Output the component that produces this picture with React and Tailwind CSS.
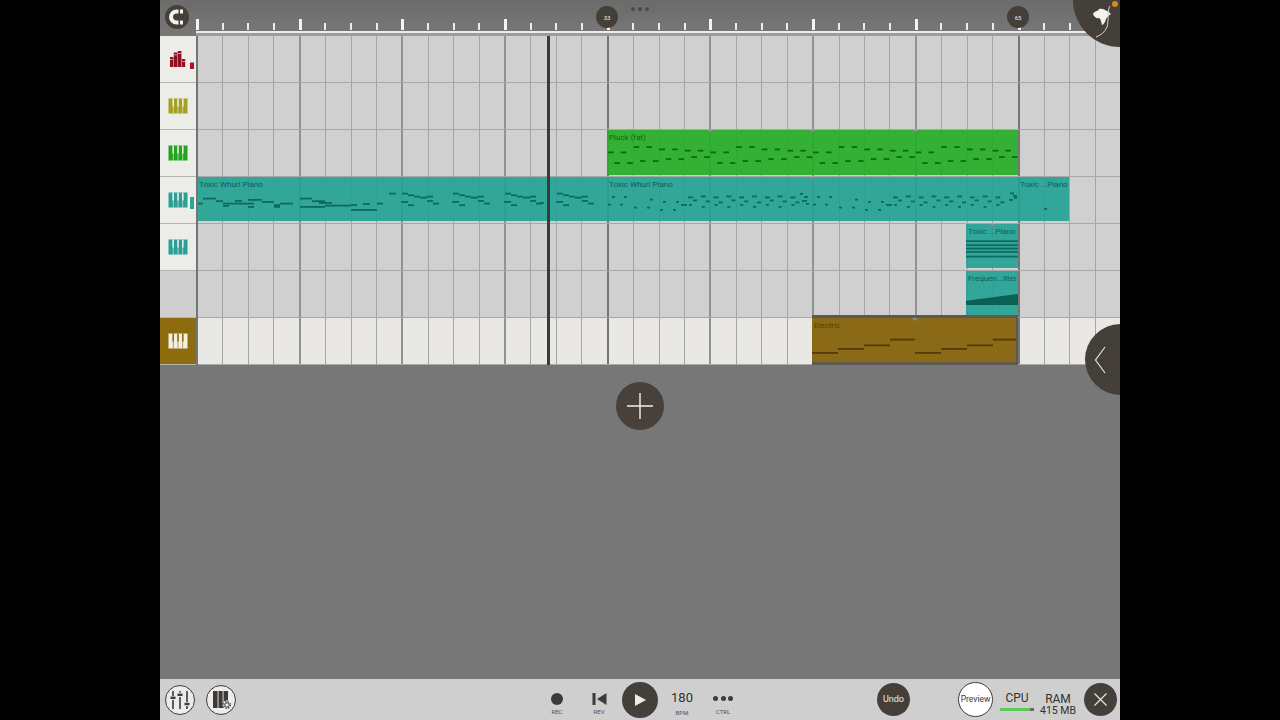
import React from 'react';

const cells = Array.from({ length: 36 }, (_, i) => i);

// note = [x, y, width] in page px, the svg viewBox is set to page coordinates
const motif = [[557, 192.7, 6], [563, 194.3, 6], [569, 195.7, 6], [575, 196.7, 7], [582, 195.7, 6], [582, 200, 6], [588, 202.7, 6], [556, 201, 7], [563, 204.3, 6]];
const shift = (list, dx) => list.map(([x, y, w]) => [x + dx, y, w]);

const whurlIntro = [
  [197, 202.7, 6], [203, 197.7, 13], [216, 200.3, 7], [223, 202.7, 6], [223, 205, 6], [235, 200, 7], [229, 202.7, 25], [248, 206, 6], [248, 199, 14], [262, 201, 12], [274, 204.3, 6], [274, 206, 6], [280, 202.7, 13],
  [300, 197.7, 12], [312, 200.3, 13], [319, 202, 13], [300, 206, 25], [325, 204.7, 26], [351, 204, 6], [351, 209, 26], [363, 203, 7], [377, 202.7, 6], [389, 192.7, 7],
  ...shift(motif, -155), ...shift(motif, -104), ...shift(motif, -52), [540, 202, 4],
];

const arpA = [[608, 203.7, 3], [612, 196, 3], [620, 203.7, 3], [624, 196, 3], [634, 206.7, 3], [647, 206.7, 3], [650, 198.7, 3], [663, 201, 3], [676, 201, 3], [660, 209, 3], [673, 209, 3], [681, 204, 6]];
const arpB = Array.from({ length: 9 }, (_, j) => {
  const x = 688 + j * 12.8;
  return [[x, 196.5 - (j % 2), 5], [x + 5, 199.5 + (j % 3), 4], [x + 1, 204 + (j % 2) * 2, 3]];
}).flat();
const whurlMain = [
  ...arpA, ...arpB, [800, 193, 3], [804, 196, 4], [802, 200, 5], [806, 203, 3],
  ...shift(arpA, 205), ...shift(arpB, 205), [1010, 192.5, 4], [1013, 195, 4], [1009, 199, 4], [1014, 197, 3],
];

const pluckSteps = [151, 161.7, 151, 161.7, 145.7, 159.7, 145.7, 159.7, 148, 157.7, 148, 157.7, 149.3, 155.7, 149.3, 155.7];
const pluck = Array.from({ length: 64 }, (_, i) => [608 + i * 6.41, pluckSteps[i % 16], 5.6]);

const electricBar = [[812, 349, 26], [838, 345, 26], [864, 341.5, 26], [890, 335.7, 25]];
const electric = [...electricBar, ...shift(electricBar, 103)];

const clips = {
  2: [{ x: 607, y: 129.5, w: 411, h: 45, name: 'Pluck (fat)', kind: 'green', notes: pluck, marks: [710, 812, 915] }],
  3: [
    { x: 197, y: 177, w: 350, h: 44, name: 'Toxic Whurl Piano', kind: 'teal', notes: whurlIntro },
    { x: 549, y: 177, w: 58, h: 44, name: '', kind: 'teal', notes: shift(motif, 0) },
    { x: 607, y: 177, w: 411, h: 44, name: 'Toxic Whurl Piano', kind: 'teal', notes: whurlMain, marks: [812] },
    { x: 1018, y: 177, w: 51, h: 44, name: 'Toxic ...Piano', kind: 'teal', notes: [[1044, 208, 3]] },
  ],
  4: [{ x: 966, y: 224, w: 52, h: 44, name: 'Toxic ...Piano', kind: 'teal', notes: [[966, 240.3, 52], [966, 244.3, 52], [966, 247.7, 52], [966, 251, 52], [966, 255.7, 52]], marks: [992] }],
  5: [{ x: 966, y: 271, w: 52, h: 44, name: 'Frequen...ilter', kind: 'teal', ramp: '966,300.7 1018,294 1018,305 966,305' }],
  6: [{ x: 812, y: 315, w: 206, h: 50, name: 'Electric', kind: 'brown', notes: electric, marks: [915] }],
};

const clipStyles = {
  teal: 'bg-[#24a292]/92 text-[#0a5f58]',
  green: 'bg-[#26ae26]/92 text-[#10661a]',
  brown: 'bg-[#8a6a16] text-[#54400c] border-y-[3px] border-r-2 border-[#5e5a50]',
};
const noteColors = { teal: '#0d6a60', green: '#0c6a12', brown: '#553a08' };

function Clip({ clip, rowTop }) {
  const { x, y, w, h, name, kind, notes = [], marks = [], ramp } = clip;
  return (
    <div
      className={`absolute overflow-hidden ${clipStyles[kind]}`}
      style={{ left: x - 196, top: y - rowTop, width: w, height: h }}
    >
      <svg className="absolute left-0 top-0" width={w} height={h} viewBox={`${x} ${y} ${w} ${h}`}>
        {ramp && <polygon points={ramp} fill="#0b5f55" />}
        {notes.map(([nx, ny, nw], i) => (
          <rect key={i} x={nx} y={ny} width={nw} height="1.8" fill={noteColors[kind]} />
        ))}
        {marks.map((m) => (
          <polygon key={m} points={`${m - 3},${y} ${m + 3},${y} ${m},${y + 3}`} fill="#8a8a8a" />
        ))}
      </svg>
      {name && <div className="relative whitespace-nowrap pl-[2px] pt-[3px] text-[8px] leading-[10px]">{name}</div>}
    </div>
  );
}

function PianoIcon({ color, bg }) {
  return (
    <svg width="20" height="16" viewBox="0 0 20 16">
      <rect x="0.5" y="0.5" width="19" height="15" fill={color} />
      {[5.2, 10, 14.8].map((gx) => (
        <g key={gx}>
          <rect x={gx - 0.8} y="0.5" width="1.6" height="8" fill={bg} />
          <rect x={gx - 0.3} y="8" width="0.6" height="7.5" fill={bg} />
        </g>
      ))}
    </svg>
  );
}

function BarsIcon() {
  return (
    <svg width="26" height="20" viewBox="0 0 26 20">
      {[[0, 8, 3.4], [3.8, 3.5, 3.6], [7.8, 2, 3.6], [11.8, 10, 3.4]].map(([x, y, w]) => (
        <g key={x}>
          <rect x={x} y={y} width={w} height={18 - y} fill="#8f1020" />
          <rect x={x} y={y + 2} width={w} height="0.7" fill="#e8c4c4" />
        </g>
      ))}
      <rect x="20" y="13.5" width="4" height="6.5" fill="#a81426" />
    </svg>
  );
}

const tracks = [
  { icon: <BarsIcon />, side: 'bg-[#ecece8]', pad: 'pl-[10px]' },
  { icon: <PianoIcon color="#a3a11e" bg="#ecece8" />, side: 'bg-[#ecece8]', pad: 'pl-[8px]' },
  { icon: <PianoIcon color="#22a51c" bg="#ecece8" />, side: 'bg-[#ecece8]', pad: 'pl-[8px]' },
  { icon: <PianoIcon color="#2a9f96" bg="#ecece8" />, side: 'bg-[#ecece8]', pad: 'pl-[8px]', meter: true },
  { icon: <PianoIcon color="#2a9f96" bg="#ecece8" />, side: 'bg-[#ecece8]', pad: 'pl-[8px]' },
  { icon: null, side: 'bg-[#cfcfcf]', pad: 'pl-[8px]' },
  { icon: <PianoIcon color="#f3efe2" bg="#8c6c0e" />, side: 'bg-[#8c6c0e]', pad: 'pl-[8px]', light: true },
];

function Ruler() {
  return (
    <div className="relative h-[36px] shrink-0 bg-linear-to-b from-[#6b6b6b] to-[#787878]">
      <div className="ml-[36px] flex h-[30px] items-end">
        {cells.map((i) => (
          <div key={i} className="flex-1">
            <div className={i % 4 === 0 ? 'h-[11px] w-[3px] bg-[#f4f4f4]' : 'h-[7px] w-[2px] bg-[#ececec]'} />
          </div>
        ))}
      </div>
      <div className="ml-[36px] mt-[1px] h-[2px] bg-[#ececec]" />
      <div className="ml-[36px] h-[3px] bg-[#9c9c9c]" />

      <button className="absolute left-[5px] top-[5px] flex h-[24px] w-[24px] items-center justify-center rounded-full bg-[#453f3a]">
        <svg width="18" height="18" viewBox="0 0 18 18" fill="none">
          <path d="M10.5 3.5 H8.5 A5.5 5.5 0 0 0 8.5 14.5 H10.5" stroke="#f4f2ee" strokeWidth="4" />
          <rect x="12" y="1.5" width="3" height="4" fill="#f4f2ee" />
          <rect x="12" y="12.5" width="3" height="4" fill="#f4f2ee" />
        </svg>
      </button>
      <div className="absolute left-[436px] top-[6px] flex h-[22px] w-[22px] items-center justify-center rounded-full bg-[#453f3a] text-[6px] text-[#eeeeee]">33</div>
      <div className="absolute left-[847px] top-[6px] flex h-[22px] w-[22px] items-center justify-center rounded-full bg-[#453f3a] text-[6px] text-[#eeeeee]">65</div>
      <div className="absolute left-[471px] top-[7px] flex gap-[3px]">
        <span className="h-[4px] w-[4px] rounded-full bg-[#4a4a4a]" />
        <span className="h-[4px] w-[4px] rounded-full bg-[#4a4a4a]" />
        <span className="h-[4px] w-[4px] rounded-full bg-[#4a4a4a]" />
      </div>
    </div>
  );
}

function TrackRow({ track, index }) {
  const rowTop = 36 + index * 47;
  const isLast = index === 6;
  return (
    <div className="flex h-[47px] shrink-0">
      <div className={`relative flex w-[36px] shrink-0 items-center border-b border-[#b4b4b0] ${track.side} ${track.pad}`}>
        {track.icon}
        {track.meter && <div className="absolute left-[30px] top-[20px] h-[12px] w-[4px] bg-[#2aa79d]" />}
      </div>
      <div className={`relative flex flex-1 border-b border-[#a8a8a8] ${isLast ? 'bg-[#e9e8e4]' : 'bg-[#d0d0d0]'}`}>
        {cells.map((i) => (
          <div
            key={i}
            className={`flex-1 ${i % 16 === 0 ? 'border-l-2 border-[#757575]' : i % 4 === 0 ? 'border-l-2 border-[#929292]' : 'border-l border-[#a4a4a4]'}`}
          />
        ))}
        {(clips[index] || []).map((clip) => (
          <Clip key={clip.x} clip={clip} rowTop={rowTop} />
        ))}
      </div>
    </div>
  );
}

function SliderIcon() {
  return (
    <svg width="22" height="22" viewBox="0 0 22 22" stroke="#3f3a36" fill="#3f3a36">
      <path d="M4 2 V7 M4 11 V20 M11 2 V3.5 M11 8 V20 M18 2 V13 M18 17 V20" strokeWidth="1.6" />
      <rect x="1.5" y="7.6" width="5" height="2.4" strokeWidth="0" />
      <rect x="8.5" y="4.6" width="5" height="2.4" strokeWidth="0" />
      <rect x="15.5" y="13.8" width="5" height="2.4" strokeWidth="0" />
    </svg>
  );
}

function KeysGearIcon() {
  return (
    <svg width="22" height="22" viewBox="0 0 22 22">
      <path d="M3 2 H18 V12 H14 V19 H3 Z" fill="#3f3a36" />
      <rect x="7.6" y="2" width="0.9" height="17" fill="#ececec" />
      <rect x="12.6" y="2" width="0.9" height="12" fill="#ececec" />
      <circle cx="17" cy="16" r="4.4" fill="#ececec" />
      <circle cx="17" cy="16" r="2.2" fill="none" stroke="#3f3a36" strokeWidth="1" />
      <circle cx="17" cy="16" r="3.4" fill="none" stroke="#3f3a36" strokeWidth="1.2" strokeDasharray="1.4 1.3" />
    </svg>
  );
}

function Label({ children }) {
  return <div className="mt-[3px] text-center text-[6px] leading-[7px] text-[#55514e]">{children}</div>;
}

function BottomBar() {
  return (
    <div className="flex h-[41px] shrink-0 items-center bg-[#cfcfcf] text-[#33302d]">
      <div className="ml-[5px] flex h-[30px] w-[30px] items-center justify-center rounded-full border-[1.5px] border-[#3f3a36] bg-[#ececec]"><SliderIcon /></div>
      <div className="ml-[11px] flex h-[30px] w-[30px] items-center justify-center rounded-full border-[1.5px] border-[#3f3a36] bg-[#ececec]"><KeysGearIcon /></div>

      <div className="ml-[306px] flex w-[30px] flex-col items-center pt-[8px]">
        <div className="h-[12px] w-[12px] rounded-full bg-[#3f3a36]" />
        <Label>REC</Label>
      </div>
      <div className="ml-[12px] flex w-[30px] flex-col items-center pt-[8px]">
        <svg width="15" height="12" viewBox="0 0 15 12" fill="#3f3a36">
          <rect x="0.5" y="0" width="3" height="12" />
          <polygon points="14.5,0 14.5,12 5,6" />
        </svg>
        <Label>REV</Label>
      </div>
      <button className="ml-[8px] flex h-[36px] w-[36px] items-center justify-center rounded-full bg-[#453f3a]">
        <svg width="14" height="14" viewBox="0 0 14 14" fill="#ecebe8"><polygon points="2,1 13,7 2,13" /></svg>
      </button>
      <div className="ml-[9px] flex w-[30px] flex-col items-center pt-[6px]">
        <div className="text-[13px] leading-[16px]">180</div>
        <Label>BPM</Label>
      </div>
      <div className="ml-[11px] flex w-[30px] flex-col items-center pt-[8px]">
        <div className="flex h-[12px] items-center gap-[2.5px]">
          <span className="h-[5px] w-[5px] rounded-full bg-[#3f3a36]" />
          <span className="h-[5px] w-[5px] rounded-full bg-[#3f3a36]" />
          <span className="h-[5px] w-[5px] rounded-full bg-[#3f3a36]" />
        </div>
        <Label>CTRL</Label>
      </div>

      <button className="ml-[139px] flex h-[33px] w-[33px] items-center justify-center rounded-full bg-[#453f3a] text-[9px] text-[#eeeeee]">Undo</button>
      <button className="ml-[48px] flex h-[35px] w-[35px] items-center justify-center rounded-full border-[1.5px] border-[#3f3a36] bg-white text-[8.5px] text-[#3f3a36]">Preview</button>

      <div className="ml-[7px] flex w-[34px] flex-col items-center pt-[2px]">
        <div className="text-[12px] leading-[14px]">CPU</div>
        <div className="mt-[3px] flex h-[3px] w-[34px] bg-[#6a6a6a]">
          <div className="h-full w-[30px] bg-[#5cc95c]" />
        </div>
      </div>
      <div className="ml-[4px] flex w-[40px] flex-col items-center pt-[9px]">
        <div className="text-[12px] leading-[12px]">RAM</div>
        <div className="whitespace-nowrap text-[10.5px] leading-[11px]">415 MB</div>
      </div>
      <button className="ml-[6px] flex h-[33px] w-[33px] items-center justify-center rounded-full bg-[#453f3a]">
        <svg width="15" height="15" viewBox="0 0 15 15" stroke="#ecebe8" strokeWidth="1.1"><path d="M1.5 1.5 L13.5 13.5 M13.5 1.5 L1.5 13.5" /></svg>
      </button>
    </div>
  );
}

export default function App() {
  return (
    <div className="flex h-[720px] justify-center overflow-hidden bg-black [font-family:Roboto,sans-serif]">
      <div className="relative flex h-[720px] w-[960px] flex-col overflow-hidden bg-[#777777]">
        <Ruler />
        <div className="relative shrink-0">
          {tracks.map((track, i) => (
            <TrackRow key={i} track={track} index={i} />
          ))}
          {/* dark line between track icons and grid */}
          <div className="absolute bottom-0 left-[36px] top-0 w-[2px] bg-[#757575]" />
          {/* playhead */}
          <div className="absolute bottom-0 left-[387px] top-0 w-[3px] bg-[#3c3a38]" />
        </div>

        <div className="flex flex-1 justify-center pt-[17px]">
          <button className="flex h-[48px] w-[48px] items-center justify-center rounded-full bg-[#47403b]">
            <svg width="28" height="28" viewBox="0 0 28 28" stroke="#f2f0ec" strokeWidth="1.4"><path d="M14 1 V27 M1 14 H27" /></svg>
          </button>
        </div>

        <BottomBar />

        {/* corner menu */}
        <div className="absolute -right-[47px] -top-[47px] h-[94px] w-[94px] rounded-full bg-[#453f3a]" />
        <svg className="absolute right-0 top-0" width="47" height="47" viewBox="0 0 47 47">
          <path d="M20 14 C22 10 25 12 26 9 C29 8 34 10 38 14 C36 15 34 17 33 19 C32 23 30 25 29 25 C28 22 28 19 26 18 C24 19 21 17 20 14 Z" fill="#f4f2ee" />
          <path d="M37 6 C34 10 36 20 34 27 C32 32 28 35 23 37" fill="none" stroke="#d8d4cc" strokeWidth="1" />
          <circle cx="42" cy="4" r="3" fill="#d98a1e" />
        </svg>

        {/* side panel handle */}
        <div className="absolute -right-[36px] top-[324px] flex h-[71px] w-[71px] items-center rounded-full bg-[#453f3a] pl-[9px]">
          <svg width="12" height="28" viewBox="0 0 12 28" fill="none" stroke="#eeeeee" strokeWidth="1.1"><path d="M11 1 L1.5 14 L11 27" /></svg>
        </div>
      </div>
    </div>
  );
}
